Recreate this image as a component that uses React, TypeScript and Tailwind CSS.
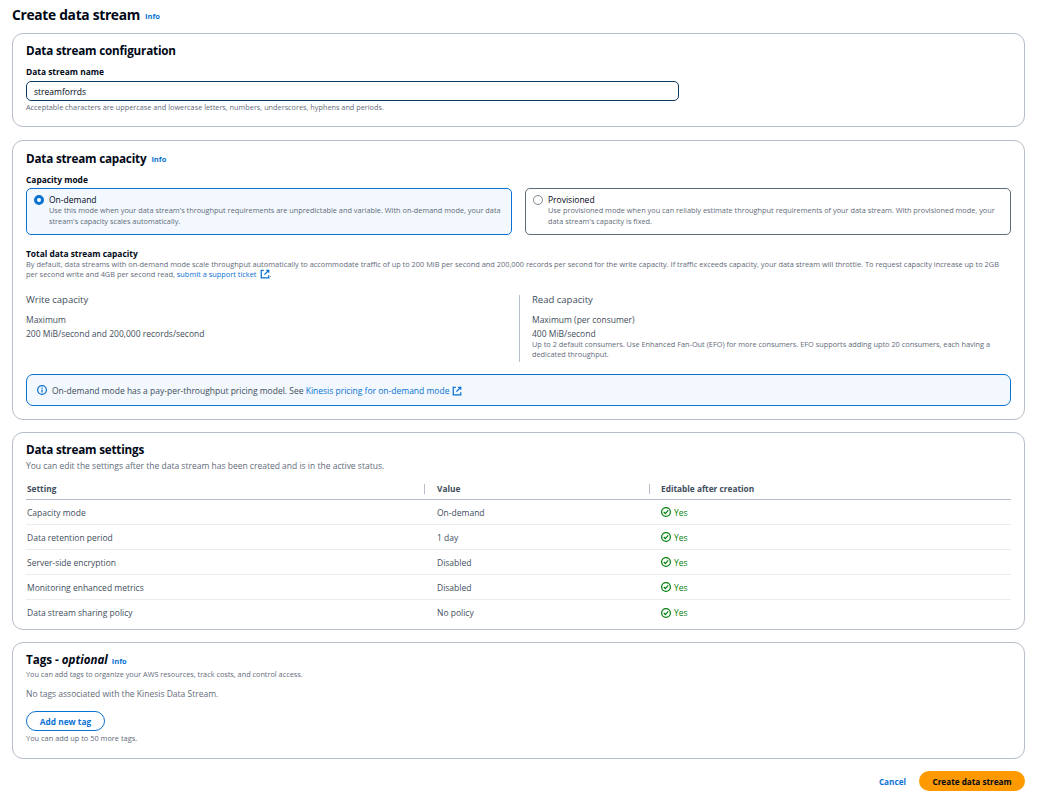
import React from 'react'

const font = "font-['Open_Sans',sans-serif]"

const rows = [
  ['Capacity mode', 'On-demand'],
  ['Data retention period', '1 day'],
  ['Server-side encryption', 'Disabled'],
  ['Monitoring enhanced metrics', 'Disabled'],
  ['Data stream sharing policy', 'No policy'],
]

const Info = ({ className = '' }: { className?: string }) => (
  <span className={`text-[7.5px] font-bold text-[#0972d3] ${className}`}>Info</span>
)

const External = () => (
  <svg viewBox="0 0 16 16" className="ml-[3px] inline-block h-[10px] w-[10px] align-[-2px]" fill="none" stroke="#0972d3" strokeWidth="2">
    <path d="M10 2H14V6" />
    <path d="M14 2L7 9" />
    <path d="M6 2H2V14H14V10" />
  </svg>
)

const YesIcon = () => (
  <svg viewBox="0 0 16 16" className="h-[10px] w-[10px]" fill="none" stroke="#037f0c" strokeWidth="2">
    <circle cx="8" cy="8" r="7" />
    <path d="M4.5 8L7 10.5L11.5 5.5" />
  </svg>
)

const Card = ({ className, children }: { className: string; children: React.ReactNode }) => (
  <section className={`ml-3 mr-5 rounded-[11px] border border-[#b6bec9] bg-white px-[13px] ${className}`}>{children}</section>
)

const Heading = ({ children }: { children: React.ReactNode }) => (
  <h2 className="text-[11.7px] leading-[16px] font-bold tracking-[-0.2px] text-[#000716]">{children}</h2>
)

const App: React.FC = () => {
  return (
    <div className={`${font} h-[801px] w-[1045px] overflow-hidden bg-white text-[8.5px] leading-[11px] text-[#414d5c]`}>
      <div className="flex h-[33px] items-center gap-[5px] pb-[7px] pl-3 pt-[4px]">
        <h1 className="text-[13.8px] leading-[20px] font-bold tracking-[-0.3px] text-[#000716]">Create data stream</h1>
        <Info className="mt-[3px]" />
      </div>

      <Card className="h-[94px] pt-[8px]">
        <Heading>Data stream configuration</Heading>
        <div className="mt-[8px] text-[8.4px] font-bold text-[#000716]">Data stream name</div>
        <div className="mt-[4px] h-[20px] w-[653px] rounded-[5px] border border-[#0f3a5f] pl-[7px] leading-[19px] text-[#000716]">streamforrds</div>
        <p className="mt-[1px] text-[7.3px] text-[#5f6b7a]">Acceptable characters are uppercase and lowercase letters, numbers, underscores, hyphens and periods.</p>
      </Card>

      <Card className="mt-[13px] h-[280px] pt-[9px]">
        <div className="flex items-center gap-[5px]">
          <Heading>Data stream capacity</Heading>
          <Info className="mt-[2px]" />
        </div>
        <div className="mt-[8px] text-[8.4px] font-bold text-[#000716]">Capacity mode</div>
        <div className="mt-[3px] flex gap-[13px]">
          <div className="flex h-[47px] w-[486px] gap-[5px] rounded-[5px] border border-[#0972d3] bg-[#f2f8fd] pl-[7px] pr-[8px] pt-[5px]">
            <div className="mt-[1px] h-[10px] w-[10px] shrink-0 rounded-full border-[3px] border-[#0972d3] bg-white" />
            <div>
              <div className="text-[#000716]">On-demand</div>
              <p className="text-[7.35px] text-[#5f6b7a]">Use this mode when your data stream's throughput requirements are unpredictable and variable. With on-demand mode, your data stream's capacity scales automatically.</p>
            </div>
          </div>
          <div className="flex h-[47px] w-[486px] gap-[5px] rounded-[5px] border border-[#5f6b7a] pl-[7px] pr-[8px] pt-[5px]">
            <div className="mt-[1px] h-[10px] w-[10px] shrink-0 rounded-full border border-[#7d8998]" />
            <div>
              <div className="text-[#000716]">Provisioned</div>
              <p className="text-[7.35px] text-[#5f6b7a]">Use provisioned mode when you can reliably estimate throughput requirements of your data stream. With provisioned mode, your data stream's capacity is fixed.</p>
            </div>
          </div>
        </div>

        <div className="mt-[13px] text-[8.4px] font-bold text-[#000716]">Total data stream capacity</div>
        <p className="text-[7.4px] leading-[10px] text-[#5f6b7a]">
          By default, data streams with on-demand mode scale throughput automatically to accommodate traffic of up to 200 MiB per second and 200,000 records per second for the write capacity. If traffic exceeds capacity, your data stream will throttle. To request capacity increase up to 2GB<br />
          per second write and 4GB per second read, <span className="text-[#0972d3]">submit a support ticket</span><External />.
        </p>

        <div className="mt-[14px] grid h-[68px] grid-cols-[493px_1fr]">
          <div>
            <div className="text-[9.5px] leading-[13px]">Write capacity</div>
            <div className="mt-[8px]">Maximum</div>
            <div className="mt-[3px]">200 MiB/second and 200,000 records/second</div>
          </div>
          <div className="mt-[2px] h-[67px] border-l border-[#b6bec9] pl-[12px]">
            <div className="-mt-[2px] text-[9.5px] leading-[13px]">Read capacity</div>
            <div className="mt-[8px]">Maximum (per consumer)</div>
            <div className="mt-[3px]">400 MiB/second</div>
            <p className="text-[7.35px] leading-[10px] text-[#5f6b7a]">Up to 2 default consumers. Use Enhanced Fan-Out (EFO) for more consumers. EFO supports adding upto 20 consumers, each having a dedicated throughput.</p>
          </div>
        </div>

        <div className="mt-[13px] flex h-[32px] items-center gap-[5px] rounded-[7px] border border-[#0972d3] bg-[#f2f8fd] pl-[10px]">
          <svg viewBox="0 0 16 16" className="h-[10px] w-[10px]" fill="none" stroke="#0972d3" strokeWidth="2">
            <circle cx="8" cy="8" r="7" />
            <path d="M8 7V12M8 4V6" />
          </svg>
          <span>On-demand mode has a pay-per-throughput pricing model. See <span className="text-[#0972d3]">Kinesis pricing for on-demand mode</span><External /></span>
        </div>
      </Card>

      <Card className="mt-[12px] h-[198px] pt-[8px]">
        <Heading>Data stream settings</Heading>
        <p className="mt-[3px] text-[8.5px] text-[#5f6b7a]">You can edit the settings after the data stream has been created and is in the active status.</p>
        <div className="mt-[7px] grid h-[22px] grid-cols-[398px_225px_1fr] items-center border-b border-[#b6bec9] text-[8.3px] font-bold">
          <div className="flex h-[10px] items-center pl-px">Setting</div>
          <div className="flex h-[10px] items-center border-l border-[#b6bec9] pl-[12px]">Value</div>
          <div className="flex h-[10px] items-center border-l border-[#b6bec9] pl-[11px]">Editable after creation</div>
        </div>
        {rows.map(([setting, value], i) => (
          <div key={setting} className={`grid h-[25px] grid-cols-[398px_225px_1fr] items-center ${i < rows.length - 1 ? 'border-b border-[#e9ebed]' : ''}`}>
            <div className="pl-px">{setting}</div>
            <div className="pl-[13px]">{value}</div>
            <div className="flex items-center gap-[3px] pl-[12px] text-[#037f0c]"><YesIcon />Yes</div>
          </div>
        ))}
      </Card>

      <Card className="mt-[12px] h-[117px] pt-[9px]">
        <div className="flex items-center gap-[4px]">
          <h2 className="text-[11.6px] leading-[16px] font-bold text-[#000716]">Tags - <em>optional</em></h2>
          <Info className="mt-[2px]" />
        </div>
        <p className="mt-[1px] text-[7.3px] text-[#5f6b7a]">You can add tags to organize your AWS resources, track costs, and control access.</p>
        <p className="mt-[8px] text-[#5f6b7a]">No tags associated with the Kinesis Data Stream.</p>
        <div className="mt-[12px] flex h-[20px] w-[79px] items-center justify-center rounded-full border border-[#0972d3] text-[8.3px] font-bold text-[#0972d3]">Add new tag</div>
        <p className="mt-[2px] text-[7.4px] text-[#5f6b7a]">You can add up to 50 more tags.</p>
      </Card>

      <div className="mr-5 mt-[12px] flex items-center justify-end gap-[13px]">
        <span className="text-[8.2px] font-bold text-[#0972d3]">Cancel</span>
        <div className="flex h-[20px] w-[106px] items-center justify-center rounded-full bg-[#ff9900] text-[8.2px] font-bold text-[#000716]">Create data stream</div>
      </div>
    </div>
  )
}

export default App
